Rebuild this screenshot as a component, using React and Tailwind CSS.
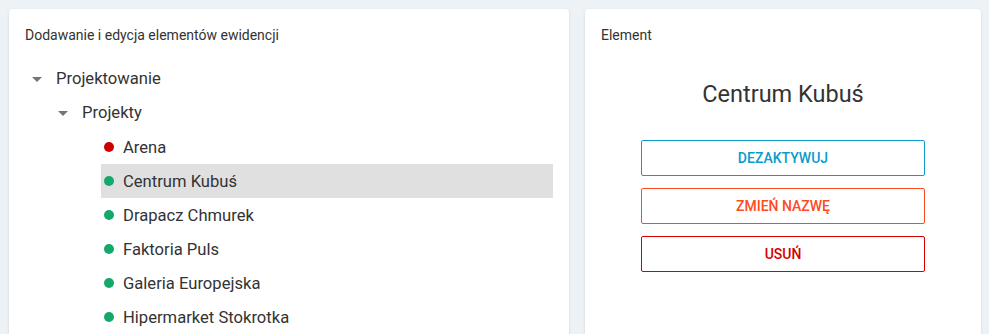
const items = [
  { name: 'Arena', active: false },
  { name: 'Centrum Kubuś', active: true, selected: true },
  { name: 'Drapacz Chmurek', active: true },
  { name: 'Faktoria Puls', active: true },
  { name: 'Galeria Europejska', active: true },
  { name: 'Hipermarket Stokrotka', active: true },
];

// maly trojkat rozwijania drzewa
function Caret() {
  return (
    <span className="w-6 flex items-center justify-center">
      <svg width="10" height="5" viewBox="0 0 10 5">
        <path d="M0 0 L10 0 L5 5 Z" fill="#757575" />
      </svg>
    </span>
  );
}

export default function App() {
  return (
    <div
      className="h-screen overflow-hidden bg-[#edf2f6] flex gap-4 pt-[9px] pl-[9px] pr-2 text-[#333]"
      style={{ fontFamily: 'Roboto, "Noto Sans", sans-serif' }}
    >
      <div className="w-[560px] bg-white rounded-sm shadow-[0_1px_3px_rgba(0,0,0,0.12)] px-4 pt-[18px] h-[360px] shrink-0">
        <div className="text-[14px] leading-4 text-[#333]">Dodawanie i edycja elementów ewidencji</div>

        <div className="mt-[18px]">
          <div className="flex items-center h-[34px] pt-[2px]">
            <Caret />
            <span className="ml-[7px] text-[16.6px]">Projektowanie</span>
          </div>
          <div className="flex items-center h-[35px] pl-[26px] pt-[2px]">
            <Caret />
            <span className="ml-[7px] text-[16.6px]">Projekty</span>
          </div>
          {items.map((it) => (
            <div
              key={it.name}
              className={
                'flex items-center h-[34px] ml-[76px] pl-[3px] ' +
                (it.selected ? 'bg-[#e0e0e0]' : '')
              }
            >
              <span
                className={
                  'w-[10px] h-[10px] rounded-full ' +
                  (it.active ? 'bg-[#14a86b]' : 'bg-[#cc0000]')
                }
              />
              <span className="ml-[9px] pt-[2px] text-[16.6px] text-[#333]">{it.name}</span>
            </div>
          ))}
        </div>
      </div>

      <div className="w-[396px] bg-white rounded-sm shadow-[0_1px_3px_rgba(0,0,0,0.12)] px-4 pt-[18px] h-[360px] shrink-0">
        <div className="text-[14px] leading-4">Element</div>
        <div className="mt-[37px] text-center text-[23.5px] leading-[28px] text-[#333]">Centrum Kubuś</div>

        <div className="mt-[32px] flex flex-col items-center gap-3">
          <button className="w-[284px] h-[36px] border border-[#0b9bcc] rounded-[2px] text-[14px] font-medium text-[#0b9bcc]">
            DEZAKTYWUJ
          </button>
          <button className="w-[284px] h-[36px] border border-[#ff4a1c] rounded-[2px] text-[14px] font-medium text-[#ff4a1c]">
            ZMIEŃ NAZWĘ
          </button>
          <button className="w-[284px] h-[36px] border border-[#d40000] rounded-[2px] text-[14px] font-medium text-[#d40000]">
            USUŃ
          </button>
        </div>
      </div>
    </div>
  );
}
